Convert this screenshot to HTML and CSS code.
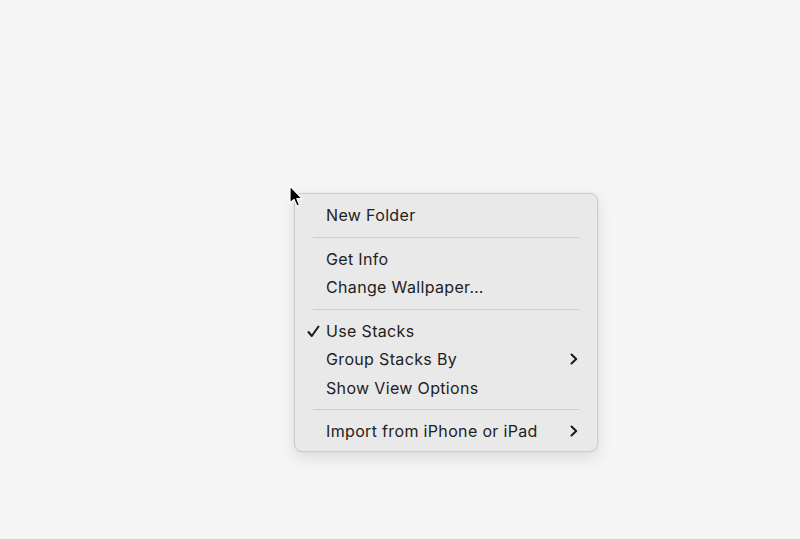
FILE: index.html
```html
<!DOCTYPE html>
<html>
<head>
<meta charset="utf-8">
<link rel="stylesheet" href="styles.css">
</head>
<body>
<div class="desktop">
  <div class="menu">
    <div class="item"><span class="label">New Folder</span></div>
    <div class="sep"></div>
    <div class="item"><span class="label">Get Info</span></div>
    <div class="item"><span class="label">Change Wallpaper…</span></div>
    <div class="sep"></div>
    <div class="item">
      <svg class="check" width="13" height="13" viewBox="0 0 13 13"><path d="M1.5 7 L4.8 11 L11.5 1.5" fill="none" stroke="#1a1a1a" stroke-width="2" stroke-linecap="round" stroke-linejoin="round"/></svg>
      <span class="label">Use Stacks</span></div>
    <div class="item"><span class="label">Group Stacks By</span>
      <svg class="chev" width="8" height="12" viewBox="0 0 8 12"><path d="M1.5 1.5 L6.2 6 L1.5 10.5" fill="none" stroke="#1a1a1a" stroke-width="2" stroke-linecap="round" stroke-linejoin="round"/></svg>
    </div>
    <div class="item"><span class="label">Show View Options</span></div>
    <div class="sep"></div>
    <div class="item"><span class="label">Import from iPhone or iPad</span>
      <svg class="chev" width="8" height="12" viewBox="0 0 8 12"><path d="M1.5 1.5 L6.2 6 L1.5 10.5" fill="none" stroke="#1a1a1a" stroke-width="2" stroke-linecap="round" stroke-linejoin="round"/></svg>
    </div>
  </div>
  <svg class="cursor" width="16" height="24" viewBox="0 0 16 24"><path d="M1 1 L1 18 L5 14.5 L8 21 L10.5 20 L7.8 13.6 L13 13.6 Z" fill="#000" stroke="#fff" stroke-width="1.2" stroke-linejoin="round"/></svg>
</div>
</body>
</html>
```
FILE: styles.css
```css
html, body {
  margin: 0;
  padding: 0;
  background: #f5f5f5;
}
.desktop {
  position: relative;
  width: 800px;
  height: 539px;
  font-family: Inter, "Noto Sans", sans-serif;
}
.menu {
  position: absolute;
  left: 294px;
  top: 193px;
  width: 304px;
  box-sizing: border-box;
  padding: 7px 0 5px;
  background: #e9e9e9;
  border: 1px solid #cdcdcd;
  border-radius: 8px;
  box-shadow: 0 6px 16px rgba(0,0,0,0.10), 0 0 2px rgba(0,0,0,0.08);
}
.item {
  position: relative;
  height: 28.5px;
  display: flex;
  align-items: center;
  padding-left: 31px;
  padding-right: 19px;
  font-size: 16px;
  color: #222;
  letter-spacing: 0.34px;
}
.label { flex: 1; }
.check {
  position: absolute;
  left: 12px;
  top: 8px;
}
.chev { flex: none; }
.sep {
  height: 1px;
  background: #cfcfcf;
  margin: 7px 18px 7px 18px;
}
.cursor {
  position: absolute;
  left: 289px;
  top: 185px;
}
```
